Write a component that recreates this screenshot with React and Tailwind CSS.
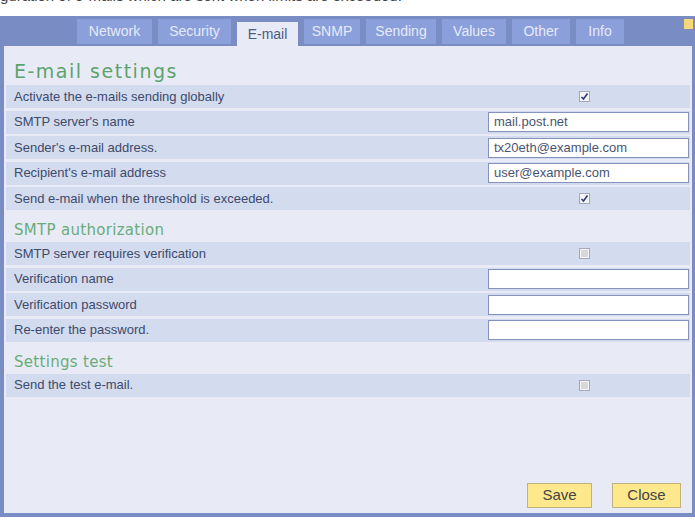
import React from "react";

const tabs = [
  { name: "Network", w: "w-[75px]" },
  { name: "Security", w: "w-[73px]" },
  { name: "E-mail", w: "w-[61px]", active: true },
  { name: "SNMP", w: "w-[56px]" },
  { name: "Sending", w: "w-[70px]" },
  { name: "Values", w: "w-[64px]" },
  { name: "Other", w: "w-[58px]" },
  { name: "Info", w: "w-[48px]" },
];

const Check = ({ checked }) => (
  <span className="flex h-[11px] w-[11px] items-center justify-center border border-[#a3a9b8] bg-[#f4f4f4]">
    {checked ? (
      <svg width="9" height="9" viewBox="0 0 9 9">
        <path d="M1.5 5 L3.5 7 L7.5 1.5" fill="none" stroke="#2e3b7a" strokeWidth="1.6" />
      </svg>
    ) : (
      <span className="h-[7px] w-[7px] bg-[#d6d8dc]" />
    )}
  </span>
);

const Row = ({ label, input, check }) => (
  <div className="flex h-[23px] items-center bg-[#d3dbee]">
    <div className="flex-1 pl-[8px] text-[13px] text-[#3d4a6c]">{label}</div>
    <div className="flex w-[202px] items-center pr-[1px]">
      {check !== undefined && (
        <div className="pl-[91px]">
          <Check checked={check} />
        </div>
      )}
      {input !== undefined && (
        <div className="flex h-[20px] w-full items-center border border-[#8592bb] bg-white px-[5px] text-[13px] text-[#4a5472]">
          {input}
        </div>
      )}
    </div>
  </div>
);

const Heading = ({ children }) => (
  <div className="h-[32px] pl-[8px] pt-[10px]">
    <h2 className="font-['DejaVu_Sans',sans-serif] text-[15px] leading-[20px] tracking-[0.3px] text-[#6aab7a]">
      {children}
    </h2>
  </div>
);

export default function App() {
  return (
    <div className="h-[523px] w-[695px] overflow-hidden bg-white font-['Liberation_Sans',Arial,sans-serif]">
      <div className="h-[16px] overflow-hidden">
        <p className="-mt-[13px] whitespace-nowrap text-[15px] leading-[17px] text-[#444]">
          guration of e-mails which are sent when limits are exceeded.
        </p>
      </div>

      <div className="relative flex h-[501px] flex-col border-b-4 border-l-4 border-r-[3px] border-[#7a8cc4] bg-[#7a8cc4]">
        <div className="flex h-[30px] items-start gap-[6px] pl-[73px]">
          {tabs.map((t) =>
            t.active ? (
              <div
                key={t.name}
                className={`${t.w} mt-[6px] flex h-[24px] items-center justify-center bg-[#e8ebf6] text-[14px] text-[#4d5a85]`}
              >
                {t.name}
              </div>
            ) : (
              <div
                key={t.name}
                className={`${t.w} mt-[3px] flex h-[25px] items-center justify-center bg-[#8b9fdb] text-[14px] text-[#e6ebf9]`}
              >
                {t.name}
              </div>
            )
          )}
        </div>
        <span className="absolute right-[-1px] top-[3px] h-[10px] w-[9px] bg-[#f6d878]" />

        <div className="flex flex-1 flex-col bg-[#e8ebf6] px-[2px]">
          <div className="h-[39px] pl-[8px] pt-[13px]">
            <h1 className="font-['DejaVu_Sans',sans-serif] text-[19px] leading-[24px] tracking-[1.5px] text-[#5da36b]">
              E-mail settings
            </h1>
          </div>

          <div className="flex flex-col gap-[2.5px]">
            <Row label="Activate the e-mails sending globally" check={true} />
            <Row label="SMTP server's name" input="mail.post.net" />
            <Row label="Sender's e-mail address." input="tx20eth@example.com" />
            <Row label="Recipient's e-mail address" input="user@example.com" />
            <Row label="Send e-mail when the threshold is exceeded." check={true} />
          </div>

          <Heading>SMTP authorization</Heading>

          <div className="flex flex-col gap-[2.5px]">
            <Row label="SMTP server requires verification" check={false} />
            <Row label="Verification name" input="" />
            <Row label="Verification password" input="" />
            <Row label="Re-enter the password." input="" />
          </div>

          <Heading>Settings test</Heading>

          <Row label="Send the test e-mail." check={false} />

          <div className="mt-auto flex justify-end gap-[20px] pb-[5px] pr-[9px]">
            <button className="h-[25px] w-[65px] border border-[#bfb27c] bg-[#fde88c] text-[15px] text-[#444]">
              Save
            </button>
            <button className="h-[25px] w-[69px] border border-[#bfb27c] bg-[#fde88c] text-[15px] text-[#444]">
              Close
            </button>
          </div>
        </div>
      </div>
    </div>
  );
}
